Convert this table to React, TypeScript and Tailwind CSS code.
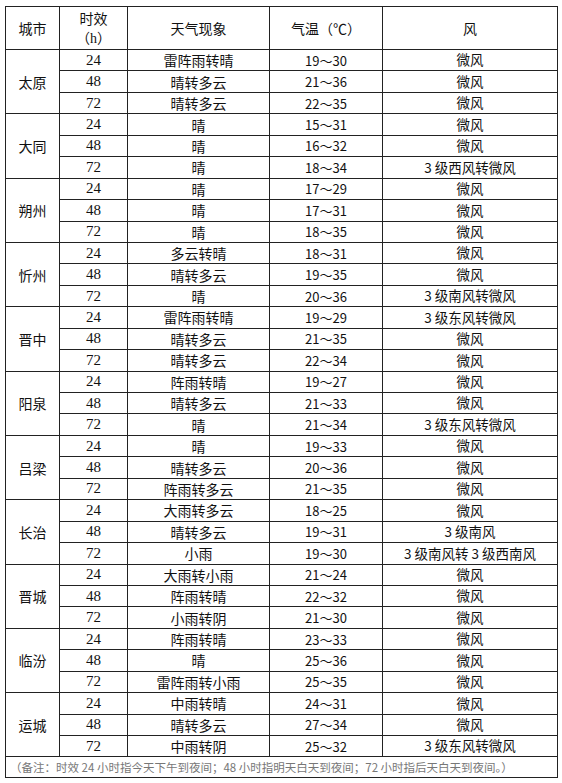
const data: [string, [string, string, string][]][] = [
  ["太原", [["雷阵雨转晴", "19～30", "微风"], ["晴转多云", "21～36", "微风"], ["晴转多云", "22～35", "微风"]]],
  ["大同", [["晴", "15～31", "微风"], ["晴", "16～32", "微风"], ["晴", "18～34", "3 级西风转微风"]]],
  ["朔州", [["晴", "17～29", "微风"], ["晴", "17～31", "微风"], ["晴", "18～35", "微风"]]],
  ["忻州", [["多云转晴", "18～31", "微风"], ["晴转多云", "19～35", "微风"], ["晴", "20～36", "3 级南风转微风"]]],
  ["晋中", [["雷阵雨转晴", "19～29", "3 级东风转微风"], ["晴转多云", "21～35", "微风"], ["晴转多云", "22～34", "微风"]]],
  ["阳泉", [["阵雨转晴", "19～27", "微风"], ["晴转多云", "21～33", "微风"], ["晴", "21～34", "3 级东风转微风"]]],
  ["吕梁", [["晴", "19～33", "微风"], ["晴转多云", "20～36", "微风"], ["阵雨转多云", "21～35", "微风"]]],
  ["长治", [["大雨转多云", "18～25", "微风"], ["晴转多云", "19～31", "3 级南风"], ["小雨", "19～30", "3 级南风转 3 级西南风"]]],
  ["晋城", [["大雨转小雨", "21～24", "微风"], ["阵雨转晴", "22～32", "微风"], ["小雨转阴", "21～30", "微风"]]],
  ["临汾", [["阵雨转晴", "23～33", "微风"], ["晴", "25～36", "微风"], ["雷阵雨转小雨", "25～35", "微风"]]],
  ["运城", [["中雨转晴", "24～31", "微风"], ["晴转多云", "27～34", "微风"], ["中雨转阴", "25～32", "3 级东风转微风"]]],
];

const hours = ["24", "48", "72"];

export default function App() {
  return (
    <div
      className="w-[562px] h-[783px] bg-white pt-[6px] pl-[5px] text-[#111]"
      style={{ fontFamily: '"Noto Sans CJK SC", sans-serif' }}
    >
      <table className="border-collapse table-fixed w-[552px] text-[14px] leading-none">
        <colgroup>
          <col className="w-[54px]" />
          <col className="w-[68px]" />
          <col className="w-[142px]" />
          <col className="w-[113px]" />
          <col className="w-[175px]" />
        </colgroup>
        <thead>
          <tr className="h-[43px]">
            <th className="border border-[#222] font-normal">城市</th>
            <th className="border border-[#222] font-normal leading-[19px]">
              时效
              <br />
              （<span className="font-['Liberation_Serif',serif]">h</span>）
            </th>
            <th className="border border-[#222] font-normal">天气现象</th>
            <th className="border border-[#222] font-normal">气温（℃）</th>
            <th className="border border-[#222] font-normal">风</th>
          </tr>
        </thead>
        <tbody>
          {data.map(([city, rows]) =>
            rows.map((r, i) => (
              <tr key={city + i} className="h-[21.45px]">
                {i === 0 && (
                  <td rowSpan={3} className="border border-[#222] text-center">
                    {city}
                  </td>
                )}
                <td className="border border-[#222] text-center text-[15px] font-['Liberation_Serif',serif]">
                  {hours[i]}
                </td>
                <td className="border border-[#222] text-center">{r[0]}</td>
                <td className="border border-[#222] text-center text-[13px]">{r[1]}</td>
                <td className="border border-[#222] text-center text-[13.5px]">{r[2]}</td>
              </tr>
            ))
          )}
          <tr className="h-[21px]">
            <td colSpan={5} className="border border-[#222] text-[11.5px] text-[#777] pl-[4px]">
              （备注：时效 24 小时指今天下午到夜间；48 小时指明天白天到夜间；72 小时指后天白天到夜间。）
            </td>
          </tr>
        </tbody>
      </table>
    </div>
  );
}
